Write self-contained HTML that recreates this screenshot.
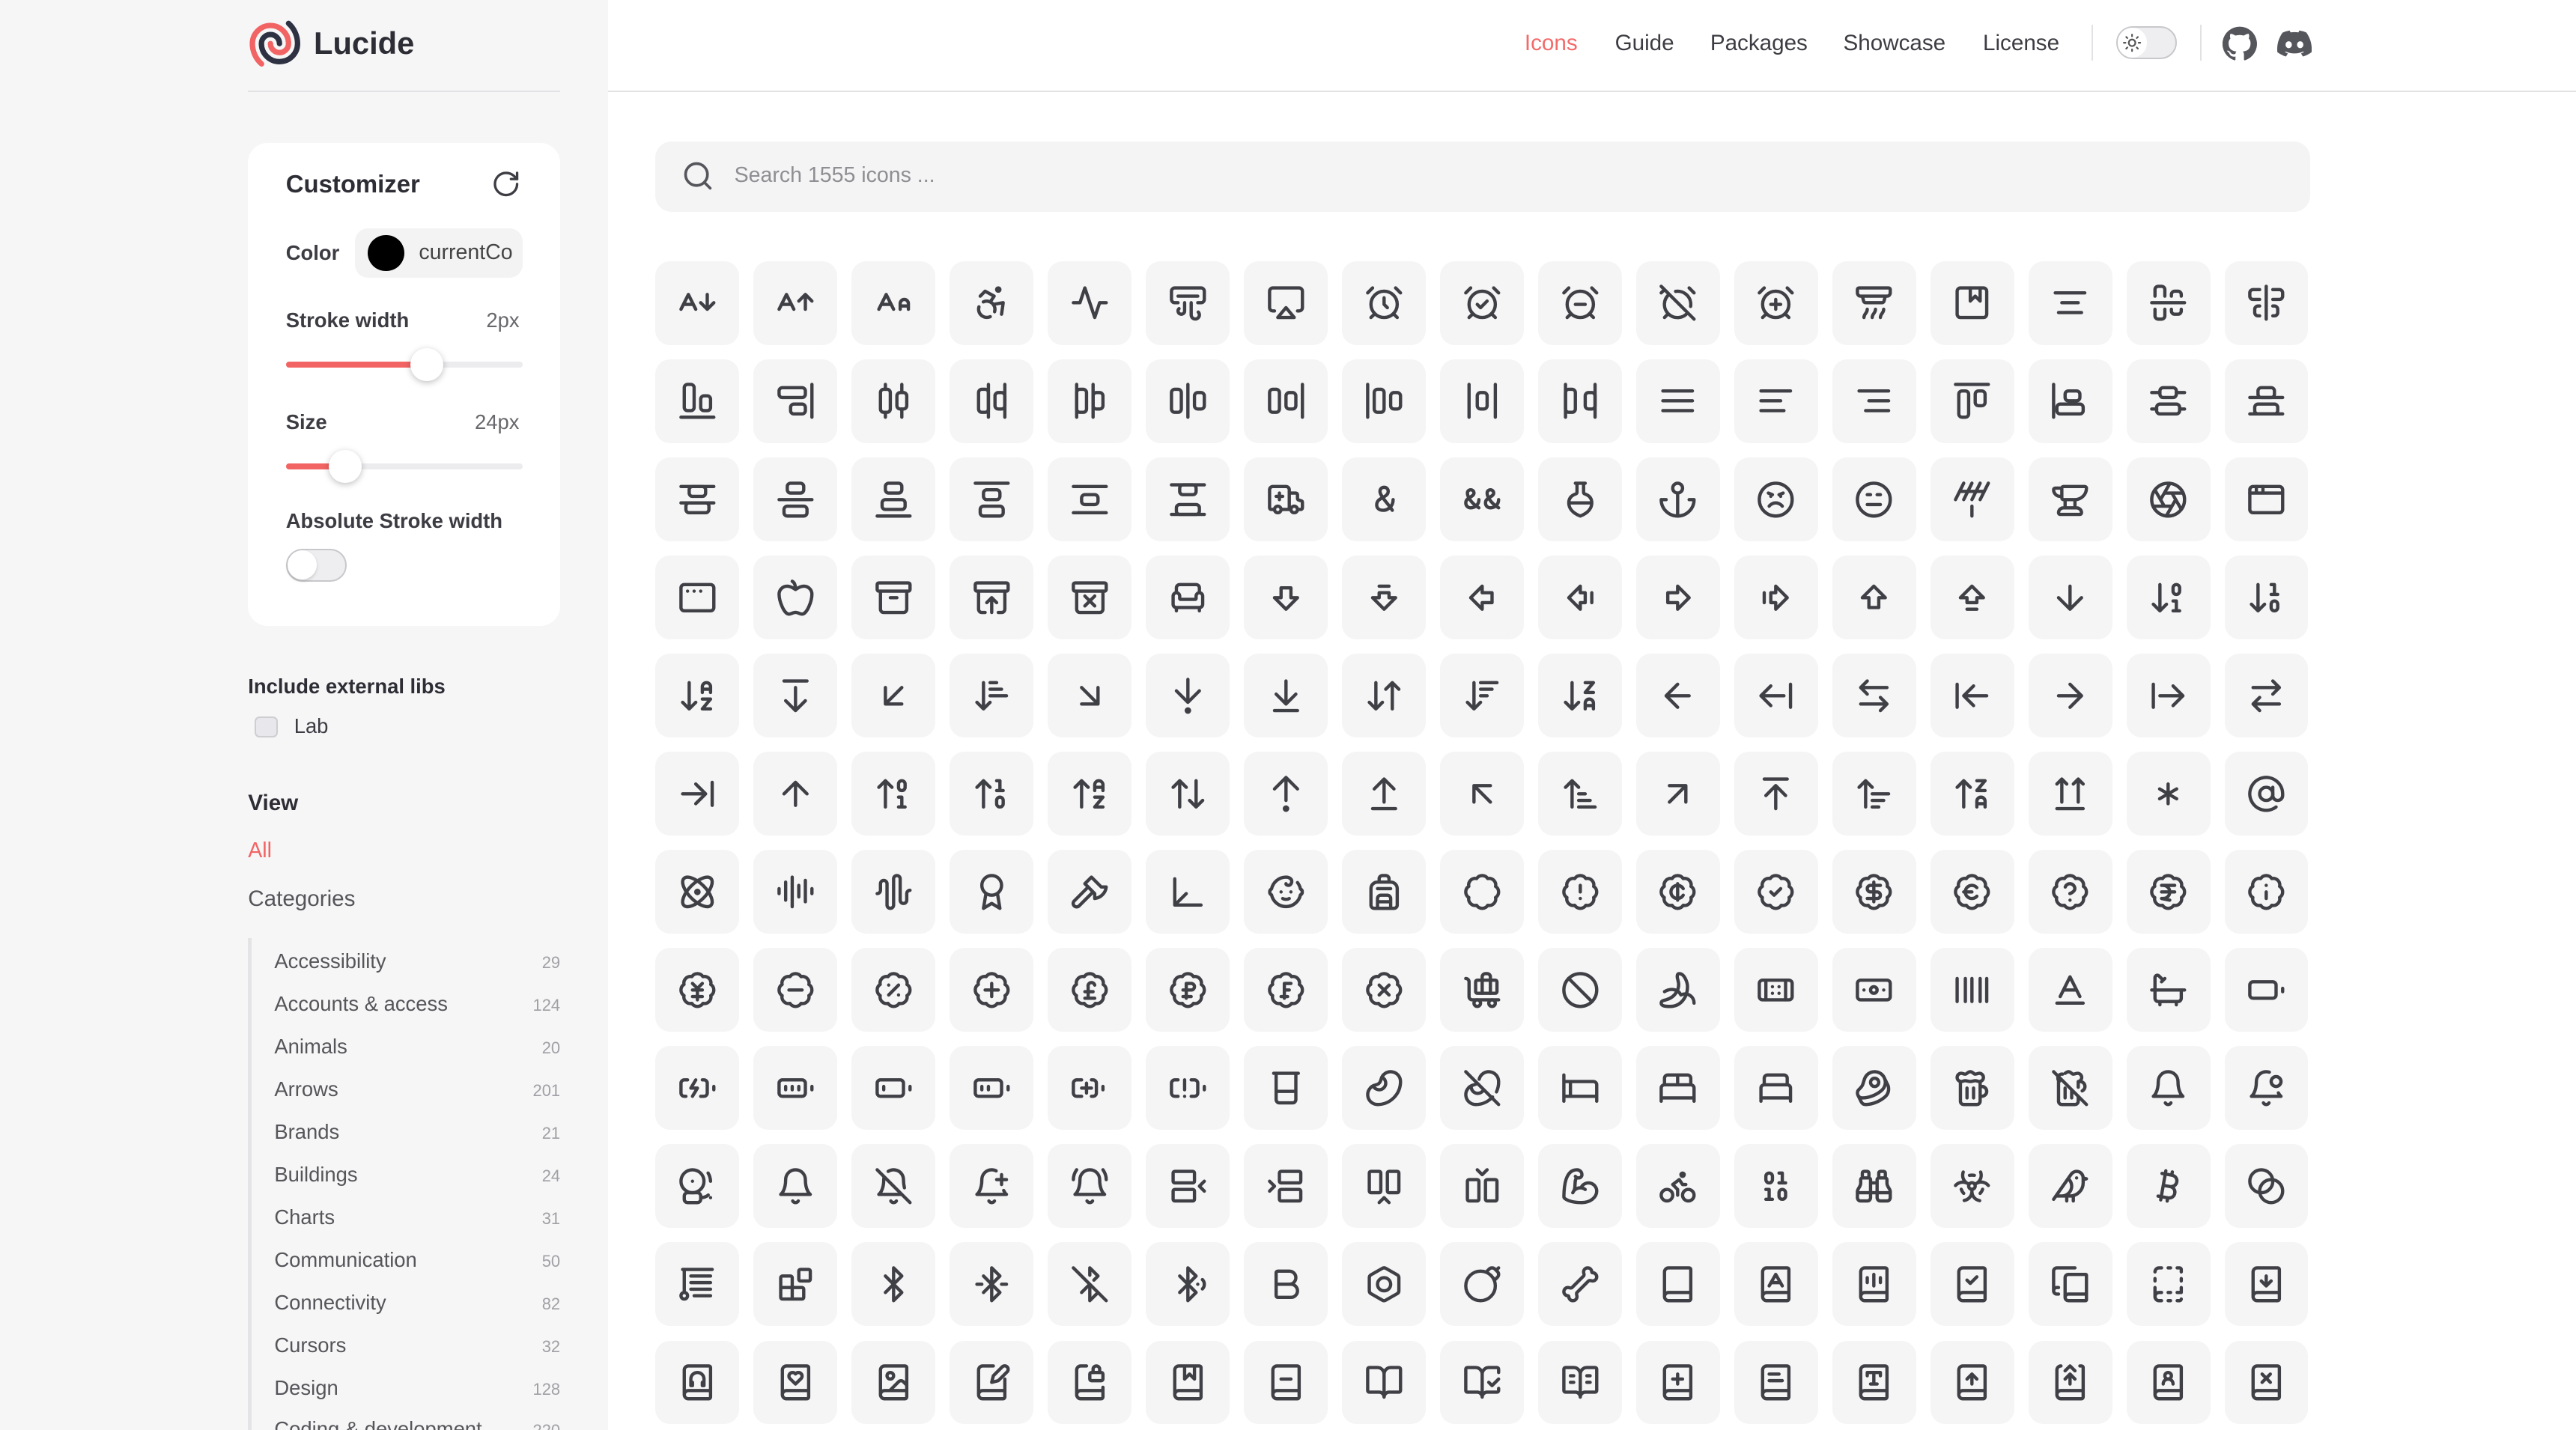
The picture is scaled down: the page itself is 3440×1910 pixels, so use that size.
<!DOCTYPE html>
<html><head><meta charset="utf-8"><style>
html{zoom:2.19388;overflow:hidden;width:1568px;height:870px}
*{box-sizing:border-box;margin:0;padding:0}
body{width:1568px;height:870px;overflow:hidden;background:#fff;font-family:"Liberation Sans",Arial,sans-serif;color:#3c3c43;position:relative}
.abs{position:absolute;white-space:nowrap}
#side{position:absolute;left:0;top:0;width:370px;height:871px;background:#f6f6f7;overflow:hidden}
.card{position:absolute;left:151px;top:87px;width:190px;height:294px;background:#fff;border-radius:12px}
.lbl{font-size:12.5px;font-weight:bold;color:#3c3c43;line-height:16px}
.val{font-size:12.5px;color:#67676c;line-height:16px}
.track{position:absolute;left:174px;width:144px;height:4px;border-radius:2px;background:#ececef}
.track b{display:block;height:4px;border-radius:2px;background:#f26464}
.thumb{position:absolute;width:20px;height:20px;border-radius:50%;background:#fff;box-shadow:0 1px 4px rgba(0,0,0,.25)}
.cat{position:absolute;left:167px;width:174px;font-size:12.5px;color:#55555a;line-height:16px}
.cat span{position:absolute;right:0;top:1px;font-size:10px;color:#a0a0a5}
.nav{position:absolute;top:18px;font-size:13.5px;line-height:17px;color:#3c3c43}
#grid{position:absolute;left:399px;top:159px;display:grid;grid-template-columns:repeat(17,51px);grid-auto-rows:51px;column-gap:8.7px;row-gap:8.75px}
#grid i{display:flex;align-items:center;justify-content:center;background:#f5f5f5;border-radius:9px}
#grid svg{width:24px;height:24px;fill:none;stroke:#3f3f46;stroke-width:2;stroke-linecap:round;stroke-linejoin:round}
</style></head><body>
<div id="side">
  <svg class="abs" style="left:151px;top:10px" width="33" height="33" viewBox="0 0 24 24" fill="none" stroke-width="2.4" stroke-linecap="round"><path d="M14 12a4 4 0 0 0-8 0 8 8 0 1 0 16 0 11.97 11.97 0 0 0-4-8.94" stroke="#2d3142"/><path d="M10 12a4 4 0 0 0 8 0 8 8 0 1 0-16 0 11.97 11.97 0 0 0 4.06 9" stroke="#f26464"/></svg>
  <div class="abs" style="left:191px;top:15px;font-size:19px;font-weight:bold;color:#2d2d35;line-height:23px">Lucide</div>
  <div class="abs" style="left:151px;top:55px;width:190px;height:1px;background:#e2e2e4"></div>
  <div class="card"></div>
  <div class="abs" style="left:174px;top:103px;font-size:15px;font-weight:bold;color:#2d2d35;line-height:18px">Customizer</div>
  <svg class="abs" style="left:299px;top:103px" width="18" height="18" viewBox="0 0 24 24" fill="none" stroke="#3c3c43" stroke-width="2" stroke-linecap="round" stroke-linejoin="round"><path d="M21 12a9 9 0 1 1-9-9c2.52 0 4.93 1 6.74 2.74L21 8"/><path d="M21 3v5h-5"/></svg>
  <div class="abs lbl" style="left:174px;top:146px">Color</div>
  <div class="abs" style="left:216px;top:139px;width:102px;height:30px;background:#f3f3f4;border-radius:8px;overflow:hidden">
    <div class="abs" style="left:8px;top:4px;width:22px;height:22px;border-radius:50%;background:#000"></div>
    <div class="abs" style="left:39px;top:7px;font-size:13px;color:#444;line-height:16px">currentCo</div>
  </div>
  <div class="abs lbl" style="left:174px;top:187px">Stroke width</div>
  <div class="abs val" style="left:296px;top:187px">2px</div>
  <div class="track" style="top:220px"><b style="width:80px"></b></div>
  <div class="thumb" style="left:250px;top:212px"></div>
  <div class="abs lbl" style="left:174px;top:249px">Size</div>
  <div class="abs val" style="left:289px;top:249px">24px</div>
  <div class="track" style="top:282px"><b style="width:32px"></b></div>
  <div class="thumb" style="left:200px;top:274px"></div>
  <div class="abs lbl" style="left:174px;top:309px">Absolute Stroke width</div>
  <div class="abs" style="left:174px;top:334px;width:37px;height:20px;border-radius:10px;background:#eeeef1;border:1px solid #c8c8cc"></div>
  <div class="abs" style="left:175px;top:335px;width:18px;height:18px;border-radius:50%;background:#fff;box-shadow:0 1px 2px rgba(0,0,0,.15)"></div>

  <div class="abs lbl" style="left:151px;top:410px;color:#2d2d35">Include external libs</div>
  <div class="abs" style="left:155px;top:436px;width:14px;height:13px;border-radius:3px;background:#e8e8ec;border:1px solid #cdcdd2"></div>
  <div class="abs" style="left:179px;top:434px;font-size:12.5px;color:#3c3c43;line-height:16px">Lab</div>
  <div class="abs" style="left:151px;top:481px;font-size:13.5px;font-weight:bold;color:#2d2d35;line-height:16px">View</div>
  <div class="abs" style="left:151px;top:510px;font-size:13px;color:#f26464;line-height:16px">All</div>
  <div class="abs" style="left:151px;top:539px;font-size:13.5px;color:#55555a;line-height:16px">Categories</div>
  <div class="abs" style="left:151px;top:571px;width:2px;height:300px;background:#e4e4e7"></div>
  <div class="cat" style="top:577px">Accessibility<span>29</span></div>
  <div class="cat" style="top:603px">Accounts &amp; access<span>124</span></div>
  <div class="cat" style="top:629px">Animals<span>20</span></div>
  <div class="cat" style="top:655px">Arrows<span>201</span></div>
  <div class="cat" style="top:681px">Brands<span>21</span></div>
  <div class="cat" style="top:707px">Buildings<span>24</span></div>
  <div class="cat" style="top:733px">Charts<span>31</span></div>
  <div class="cat" style="top:759px">Communication<span>50</span></div>
  <div class="cat" style="top:785px">Connectivity<span>82</span></div>
  <div class="cat" style="top:811px">Cursors<span>32</span></div>
  <div class="cat" style="top:837px">Design<span>128</span></div>
  <div class="cat" style="top:862px">Coding &amp; development<span>220</span></div>
</div>

<div class="abs" style="left:370px;top:55px;width:1198px;height:1px;background:#e2e2e4"></div>
<div class="nav" style="left:928px;color:#f36a6a">Icons</div>
<div class="nav" style="left:983px">Guide</div>
<div class="nav" style="left:1041px">Packages</div>
<div class="nav" style="left:1122px">Showcase</div>
<div class="nav" style="left:1207px">License</div>
<div class="abs" style="left:1273px;top:15px;width:1px;height:22px;background:#e2e2e4"></div>
<div class="abs" style="left:1288px;top:16px;width:37px;height:20px;border-radius:10px;background:#eeeef1;border:1px solid #c8c8cc"></div>
<div class="abs" style="left:1289px;top:17px;width:18px;height:18px;border-radius:50%;background:#fff"></div>
<svg class="abs" style="left:1292px;top:20px" width="12" height="12" viewBox="0 0 24 24" fill="none" stroke="#555" stroke-width="2" stroke-linecap="round"><circle cx="12" cy="12" r="4"/><path d="M12 2v2M12 20v2M4.9 4.9l1.4 1.4M17.7 17.7l1.4 1.4M2 12h2M20 12h2M6.3 17.7l-1.4 1.4M19.1 4.9l-1.4 1.4"/></svg>
<div class="abs" style="left:1339px;top:15px;width:1px;height:22px;background:#e2e2e4"></div>
<svg class="abs" style="left:1353px;top:16px" width="21" height="21" viewBox="0 0 24 24" fill="#55555c"><path d="M12 .3a12 12 0 0 0-3.8 23.4c.6.1.8-.3.8-.6v-2c-3.3.7-4-1.6-4-1.6-.6-1.4-1.4-1.8-1.4-1.8-1-.7.1-.7.1-.7 1.2.1 1.8 1.2 1.8 1.2 1 1.8 2.8 1.3 3.5 1 0-.8.4-1.3.7-1.6-2.7-.3-5.5-1.3-5.5-6 0-1.200.5-2.3 1.3-3.1-.2-.4-.6-1.6 0-3.2 0 0 1-.3 3.4 1.2a11.5 11.5 0 0 1 6 0c2.3-1.5 3.3-1.2 3.3-1.2.6 1.6.2 2.8 0 3.2.9.8 1.3 1.9 1.3 3.2 0 4.6-2.8 5.6-5.5 5.9.5.4.9 1 .9 2.2v3.3c0 .3.1.7.8.6A12 12 0 0 0 12 .3"/></svg>
<svg class="abs" style="left:1386px;top:16px" width="21" height="21" viewBox="0 0 24 24" fill="#55555c"><path d="M20.3 4.4A19.8 19.8 0 0 0 15.4 3l-.6 1.3a18.3 18.3 0 0 0-5.5 0L8.6 3a19.7 19.7 0 0 0-4.9 1.5C.5 9.1-.3 13.6.1 18.1a19.9 19.9 0 0 0 6 3l1.3-2.1c-.7-.3-1.4-.6-2-1l.5-.4a14.2 14.2 0 0 0 12.2 0l.5.4c-.6.4-1.3.7-2 1l1.3 2.1a19.8 19.8 0 0 0 6-3c.5-5.2-.8-9.7-3.6-13.7zM8 15.3c-1.2 0-2.2-1.1-2.2-2.4S6.8 10.5 8 10.5s2.2 1.1 2.2 2.4-1 2.4-2.2 2.4zm8 0c-1.2 0-2.2-1.1-2.2-2.4s1-2.4 2.2-2.4 2.2 1.1 2.2 2.4-1 2.4-2.2 2.4z"/></svg>

<div class="abs" style="left:399px;top:86px;width:1007px;height:43px;background:#f4f4f5;border-radius:10px"></div>
<svg class="abs" style="left:415px;top:97px" width="20" height="20" viewBox="0 0 24 24" fill="none" stroke="#55555c" stroke-width="2" stroke-linecap="round"><circle cx="11" cy="11" r="8"/><path d="m21 21-4.3-4.3"/></svg>
<div class="abs" style="left:447px;top:99px;font-size:13px;color:#8e8e93;line-height:16px">Search 1555 icons ...</div>

<div id="grid">
<i><svg viewBox="0 0 24 24"><path d="M3.5 13h6M2 16l4.5-9 4.5 9M18 7v9M14 12l4 4 4-4"/></svg></i>
<i><svg viewBox="0 0 24 24"><path d="M3.5 13h6M2 16l4.5-9 4.5 9M18 16V7M14 11l4-4 4 4"/></svg></i>
<i><svg viewBox="0 0 24 24"><path d="M21 14h-5M16 16v-3.5a2.5 2.5 0 0 1 5 0V16M4.5 13h6M3 16l4.5-9 4.5 9"/></svg></i>
<i><svg viewBox="0 0 24 24"><circle cx="16" cy="4" r="1"/><path d="M18 19l1-7-6 1M5 8l3-3 5.5 3-2.36 3.5M4.24 14.5a5 5 0 0 0 6.88 6M13.760 17.5a5 5 0 0 0-6.88-6"/></svg></i>
<i><svg viewBox="0 0 24 24"><path d="M22 12h-4l-3 9L9 3l-3 9H2"/></svg></i>
<i><svg viewBox="0 0 24 24"><path d="M6 12H4a2 2 0 0 1-2-2V5a2 2 0 0 1 2-2h16a2 2 0 0 1 2 2v5a2 2 0 0 1-2 2h-2M6 8h12M18.3 17.7a2.5 2.5 0 0 1-3.16 3.83 2.53 2.53 0 0 1-1.14-2V12M6.6 15.6A2 2 0 1 0 10 17v-5"/></svg></i>
<i><svg viewBox="0 0 24 24"><path d="M5 17H4a2 2 0 0 1-2-2V5a2 2 0 0 1 2-2h16a2 2 0 0 1 2 2v10a2 2 0 0 1-2 2h-1M12 15l5 6H7z"/></svg></i>
<i><svg viewBox="0 0 24 24"><circle cx="12" cy="13" r="8"/><path d="M12 9v4l2 2M5 3 2 6M22 6l-3-3M6.38 18.7 4 21M17.64 18.67 20 21"/></svg></i>
<i><svg viewBox="0 0 24 24"><circle cx="12" cy="13" r="8"/><path d="M5 3 2 6M22 6l-3-3M6.38 18.7 4 21M17.64 18.67 20 21M9 13l2 2 4-4"/></svg></i>
<i><svg viewBox="0 0 24 24"><circle cx="12" cy="13" r="8"/><path d="M5 3 2 6M22 6l-3-3M6.38 18.7 4 21M17.64 18.67 20 21M9 13h6"/></svg></i>
<i><svg viewBox="0 0 24 24"><path d="M6.87 6.87a8 8 0 1 0 11.26 11.26M19.9 14.25a8 8 0 0 0-9.15-9.15M22 6l-3-3M6.26 18.67 4 21M2 2l20 20M4 4 2 6"/></svg></i>
<i><svg viewBox="0 0 24 24"><circle cx="12" cy="13" r="8"/><path d="M5 3 2 6M22 6l-3-3M6.38 18.7 4 21M17.64 18.67 20 21M12 10v6M9 13h6"/></svg></i>
<i><svg viewBox="0 0 24 24"><path d="M11 21c0-2.5 2-2.5 2-5M16 21c0-2.5 2-2.5 2-5M19 8l-.8 3a1.25 1.25 0 0 1-1.2 1H7a1.25 1.25 0 0 1-1.2-1L5 8M21 3a1 1 0 0 1 1 1v2a2 2 0 0 1-2 2H4a2 2 0 0 1-2-2V4a1 1 0 0 1 1-1zM6 21c0-2.5 2-2.5 2-5"/></svg></i>
<i><svg viewBox="0 0 24 24"><rect x="3" y="3" width="18" height="18" rx="2"/><path d="M11 3v8l3-3 3 3V3"/></svg></i>
<i><svg viewBox="0 0 24 24"><path d="M17 12H7M19 18H5M21 6H3"/></svg></i>
<i><svg viewBox="0 0 24 24"><path d="M2 12h20M10 16v4a2 2 0 0 1-2 2H6a2 2 0 0 1-2-2v-4M10 8V4a2 2 0 0 0-2-2H6a2 2 0 0 0-2 2v4M20 16v1a2 2 0 0 1-2 2h-2a2 2 0 0 1-2-2v-1M14 8V7c0-1.1.9-2 2-2h2a2 2 0 0 1 2 2v1"/></svg></i>
<i><svg viewBox="0 0 24 24"><path d="M12 2v20M8 10H4a2 2 0 0 1-2-2V6c0-1.1.9-2 2-2h4M16 10h4a2 2 0 0 0 2-2V6a2 2 0 0 0-2-2h-4M8 20H7a2 2 0 0 1-2-2v-2c0-1.1.9-2 2-2h1M16 14h1a2 2 0 0 1 2 2v2a2 2 0 0 1-2 2h-1"/></svg></i>
<i><svg viewBox="0 0 24 24"><rect x="4" y="2" width="6" height="16" rx="2"/><rect x="14" y="9" width="6" height="9" rx="2"/><path d="M22 22H2"/></svg></i>
<i><svg viewBox="0 0 24 24"><rect x="2" y="4" width="16" height="6" rx="2"/><rect x="9" y="14" width="9" height="6" rx="2"/><path d="M22 22V2"/></svg></i>
<i><svg viewBox="0 0 24 24"><rect x="4" y="5" width="6" height="14" rx="2"/><rect x="14" y="7" width="6" height="10" rx="2"/><path d="M17 22v-5M17 7V2M7 22v-3M7 5V2"/></svg></i>
<i><svg viewBox="0 0 24 24"><rect x="4" y="5" width="6" height="14" rx="2"/><rect x="14" y="7" width="6" height="10" rx="2"/><path d="M10 2v20M20 2v20"/></svg></i>
<i><svg viewBox="0 0 24 24"><rect x="4" y="5" width="6" height="14" rx="2"/><rect x="14" y="7" width="6" height="10" rx="2"/><path d="M4 2v20M14 2v20"/></svg></i>
<i><svg viewBox="0 0 24 24"><rect x="2" y="5" width="6" height="14" rx="2"/><rect x="16" y="7" width="6" height="10" rx="2"/><path d="M12 2v20"/></svg></i>
<i><svg viewBox="0 0 24 24"><rect x="2" y="5" width="6" height="14" rx="2"/><rect x="12" y="7" width="6" height="10" rx="2"/><path d="M22 2v20"/></svg></i>
<i><svg viewBox="0 0 24 24"><rect x="6" y="5" width="6" height="14" rx="2"/><rect x="16" y="7" width="6" height="10" rx="2"/><path d="M2 2v20"/></svg></i>
<i><svg viewBox="0 0 24 24"><rect x="9" y="7" width="6" height="10" rx="2"/><path d="M4 22V2M20 22V2"/></svg></i>
<i><svg viewBox="0 0 24 24"><rect x="3" y="5" width="6" height="14" rx="2"/><rect x="15" y="7" width="6" height="10" rx="2"/><path d="M3 2v20M21 2v20"/></svg></i>
<i><svg viewBox="0 0 24 24"><path d="M3 6h18M3 12h18M3 18h18"/></svg></i>
<i><svg viewBox="0 0 24 24"><path d="M15 12H3M17 18H3M21 6H3"/></svg></i>
<i><svg viewBox="0 0 24 24"><path d="M21 12H9M21 18H7M21 6H3"/></svg></i>
<i><svg viewBox="0 0 24 24"><rect x="4" y="6" width="6" height="16" rx="2"/><rect x="14" y="6" width="6" height="9" rx="2"/><path d="M22 2H2"/></svg></i>
<i><svg viewBox="0 0 24 24"><rect x="9" y="6" width="9" height="6" rx="2"/><rect x="4" y="14" width="16" height="6" rx="2"/><path d="M2 2v20"/></svg></i>
<i><svg viewBox="0 0 24 24"><rect x="5" y="14" width="14" height="6" rx="2"/><rect x="7" y="4" width="10" height="6" rx="2"/><path d="M22 17h-3M22 7h-5M5 17H2M7 7H2"/></svg></i>
<i><svg viewBox="0 0 24 24"><rect x="5" y="14" width="14" height="6" rx="2"/><rect x="7" y="4" width="10" height="6" rx="2"/><path d="M2 20h20M2 10h20"/></svg></i>
<i><svg viewBox="0 0 24 24"><rect x="5" y="14" width="14" height="6" rx="2"/><rect x="7" y="4" width="10" height="6" rx="2"/><path d="M2 14h20M2 4h20"/></svg></i>
<i><svg viewBox="0 0 24 24"><rect x="5" y="16" width="14" height="6" rx="2"/><rect x="7" y="2" width="10" height="6" rx="2"/><path d="M2 12h20"/></svg></i>
<i><svg viewBox="0 0 24 24"><rect x="5" y="12" width="14" height="6" rx="2"/><rect x="7" y="2" width="10" height="6" rx="2"/><path d="M2 22h20"/></svg></i>
<i><svg viewBox="0 0 24 24"><rect x="5" y="16" width="14" height="6" rx="2"/><rect x="7" y="6" width="10" height="6" rx="2"/><path d="M2 2h20"/></svg></i>
<i><svg viewBox="0 0 24 24"><rect x="7" y="9" width="10" height="6" rx="2"/><path d="M22 20H2M22 4H2"/></svg></i>
<i><svg viewBox="0 0 24 24"><rect x="5" y="15" width="14" height="6" rx="2"/><rect x="7" y="3" width="10" height="6" rx="2"/><path d="M2 21h20M2 3h20"/></svg></i>
<i><svg viewBox="0 0 24 24"><path d="M10 10H6M14 18V6a2 2 0 0 0-2-2H4a2 2 0 0 0-2 2v11a1 1 0 0 0 1 1h2M19 18h2a1 1 0 0 0 1-1v-3.28a1 1 0 0 0-.68-.95l-1.8-.6A1 1 0 0 1 19 11.3V9a1 1 0 0 0-1-1h-4M8 8v4M9 18h6"/><circle cx="17" cy="18" r="2"/><circle cx="7" cy="18" r="2"/></svg></i>
<i><svg viewBox="0 0 24 24"><path d="M17.5 12c0 4.4-3.6 6.5-6 6.5s-4-1.2-4-3.3c0-4.8 7-4.2 7-8.2 0-1.5-1-2.5-2.5-2.5S9.5 5.6 9.5 7c0 3 6 8.6 7.5 11.5"/></svg></i>
<i><svg viewBox="0 0 24 24"><path d="M10 17c-5-3-7-7-7-9a2 2 0 0 1 4 0c0 2.5-5 2.5-5 6 0 1.7 1.3 3 3 3 2.8 0 5-2.2 5-5M22 17c-5-3-7-7-7-9a2 2 0 0 1 4 0c0 2.5-5 2.5-5 6 0 1.7 1.3 3 3 3 2.8 0 5-2.2 5-5"/></svg></i>
<i><svg viewBox="0 0 24 24"><path d="M10 2v5.6c0 .4-.3.8-.7.9C6.6 9.4 5 11 5 14c0 3 2 6 7 8 5-2 7-5 7-8 0-3-1.6-4.6-4.3-5.5-.4-.1-.7-.5-.7-.9V2M9 2h6M5 14h14"/></svg></i>
<i><svg viewBox="0 0 24 24"><path d="M12 22V8M5 12H2a10 10 0 0 0 20 0h-3"/><circle cx="12" cy="5" r="3"/></svg></i>
<i><svg viewBox="0 0 24 24"><circle cx="12" cy="12" r="10"/><path d="M16 16s-1.5-2-4-2-4 2-4 2M7.5 8 10 9M14 9l2.5-1M9 10h.01M15 10h.01"/></svg></i>
<i><svg viewBox="0 0 24 24"><circle cx="12" cy="12" r="10"/><path d="M8 15h8M8 9h2M14 9h2"/></svg></i>
<i><svg viewBox="0 0 24 24"><path d="M2 12 7 2M7 12l5-10M12 12l5-10M17 12l5-10M4.5 7h15M12 16v6"/></svg></i>
<i><svg viewBox="0 0 24 24"><path d="M7 10H6a4 4 0 0 1-4-4 1 1 0 0 1 1-1h4M7 5a1 1 0 0 1 1-1h13a1 1 0 0 1 1 1 7 7 0 0 1-7 7H8a1 1 0 0 1-1-1zM9 12v5M15 12v5M5 20a3 3 0 0 1 3-3h8a3 3 0 0 1 3 3 1 1 0 0 1-1 1H6a1 1 0 0 1-1-1"/></svg></i>
<i><svg viewBox="0 0 24 24"><circle cx="12" cy="12" r="10"/><path d="M14.31 8l5.74 9.94M9.69 8h11.48M7.38 12l5.74-9.94M9.69 16 3.95 6.06M14.31 16H2.83M16.62 12l-5.74 9.94"/></svg></i>
<i><svg viewBox="0 0 24 24"><rect x="2" y="4" width="20" height="16" rx="2"/><path d="M10 4v4M2 8h20M6 4v4"/></svg></i>
<i><svg viewBox="0 0 24 24"><rect x="2" y="4" width="20" height="16" rx="2"/><path d="M6 8h.01M10 8h.01M14 8h.01"/></svg></i>
<i><svg viewBox="0 0 24 24"><path d="M12 20.94c1.5 0 2.75 1.06 4 1.06 3 0 6-8 6-12.22A4.91 4.91 0 0 0 17 5c-2.22 0-4 1.44-5 2-1-.56-2.78-2-5-2a4.9 4.9 0 0 0-5 4.78C2 14 5 22 8 22c1.25 0 2.5-1.06 4-1.06ZM10 2c1 .5 2 2 2 5"/></svg></i>
<i><svg viewBox="0 0 24 24"><rect x="2" y="3" width="20" height="5" rx="1"/><path d="M4 8v11a2 2 0 0 0 2 2h12a2 2 0 0 0 2-2V8M10 12h4"/></svg></i>
<i><svg viewBox="0 0 24 24"><rect x="2" y="3" width="20" height="5" rx="1"/><path d="M4 8v11a2 2 0 0 0 2 2h2M20 8v11a2 2 0 0 1-2 2h-2M9 15l3-3 3 3M12 12v9"/></svg></i>
<i><svg viewBox="0 0 24 24"><rect x="2" y="3" width="20" height="5" rx="1"/><path d="M4 8v11a2 2 0 0 0 2 2h12a2 2 0 0 0 2-2V8M15 11l-6 6M9 11l6 6"/></svg></i>
<i><svg viewBox="0 0 24 24"><path d="M19 9V6a2 2 0 0 0-2-2H7a2 2 0 0 0-2 2v3M3 16a2 2 0 0 0 2 2h14a2 2 0 0 0 2-2v-5a2 2 0 0 0-4 0v1.5a.5.5 0 0 1-.5.5h-9a.5.5 0 0 1-.5-.5V11a2 2 0 0 0-4 0zM5 18v2M19 18v2"/></svg></i>
<i><svg viewBox="0 0 24 24"><path d="M15 6v6h4l-7 7-7-7h4V6h6z"/></svg></i>
<i><svg viewBox="0 0 24 24"><path d="M15 5H9M15 9v3h4l-7 7-7-7h4V9z"/></svg></i>
<i><svg viewBox="0 0 24 24"><path d="M18 15h-6v4l-7-7 7-7v4h6v6z"/></svg></i>
<i><svg viewBox="0 0 24 24"><path d="M19 15V9M15 15h-3v4l-7-7 7-7v4h3v6z"/></svg></i>
<i><svg viewBox="0 0 24 24"><path d="M6 9h6V5l7 7-7 7v-4H6V9z"/></svg></i>
<i><svg viewBox="0 0 24 24"><path d="M5 9v6M9 9h3V5l7 7-7 7v-4H9V9z"/></svg></i>
<i><svg viewBox="0 0 24 24"><path d="M9 18v-6H5l7-7 7 7h-4v6H9z"/></svg></i>
<i><svg viewBox="0 0 24 24"><path d="M9 19h6M9 15v-3H5l7-7 7 7h-4v3H9z"/></svg></i>
<i><svg viewBox="0 0 24 24"><path d="M12 5v14M19 12l-7 7-7-7"/></svg></i>
<i><svg viewBox="0 0 24 24"><path d="M3 16l4 4 4-4M7 20V4M17 20v-6h-2M15 20h4"/><rect x="15" y="4" width="4" height="6" ry="2"/></svg></i>
<i><svg viewBox="0 0 24 24"><path d="M3 16l4 4 4-4M7 20V4M17 10V4h-2M15 10h4"/><rect x="15" y="14" width="4" height="6" ry="2"/></svg></i>
<i><svg viewBox="0 0 24 24"><path d="M3 16l4 4 4-4M7 20V4M20 8h-5M15 10V6.5a2.5 2.5 0 0 1 5 0V10M15 14h5l-5 6h5"/></svg></i>
<i><svg viewBox="0 0 24 24"><path d="M19 3H5M12 21V7M6 15l6 6 6-6"/></svg></i>
<i><svg viewBox="0 0 24 24"><path d="M17 7 7 17M17 17H7V7"/></svg></i>
<i><svg viewBox="0 0 24 24"><path d="M3 16l4 4 4-4M7 20V4M11 4h4M11 8h7M11 12h10"/></svg></i>
<i><svg viewBox="0 0 24 24"><path d="M7 7l10 10M17 7v10H7"/></svg></i>
<i><svg viewBox="0 0 24 24"><path d="M12 2v14M19 9l-7 7-7-7"/><circle cx="12" cy="21" r="1"/></svg></i>
<i><svg viewBox="0 0 24 24"><path d="M12 17V3M6 11l6 6 6-6M19 21H5"/></svg></i>
<i><svg viewBox="0 0 24 24"><path d="M3 16l4 4 4-4M7 20V4M21 8l-4-4-4 4M17 4v16"/></svg></i>
<i><svg viewBox="0 0 24 24"><path d="M3 16l4 4 4-4M7 20V4M11 4h10M11 8h7M11 12h4"/></svg></i>
<i><svg viewBox="0 0 24 24"><path d="M3 16l4 4 4-4M7 4v16M15 4h5l-5 6h5M15 20v-3.5a2.5 2.5 0 0 1 5 0V20M20 18h-5"/></svg></i>
<i><svg viewBox="0 0 24 24"><path d="M12 19l-7-7 7-7M19 12H5"/></svg></i>
<i><svg viewBox="0 0 24 24"><path d="M9 6l-6 6 6 6M3 12h14M21 19V5"/></svg></i>
<i><svg viewBox="0 0 24 24"><path d="M8 3 4 7l4 4M4 7h16M16 21l4-4-4-4M20 17H4"/></svg></i>
<i><svg viewBox="0 0 24 24"><path d="M3 19V5M13 6l-6 6 6 6M7 12h14"/></svg></i>
<i><svg viewBox="0 0 24 24"><path d="M5 12h14M12 5l7 7-7 7"/></svg></i>
<i><svg viewBox="0 0 24 24"><path d="M3 5v14M21 12H7M15 18l6-6-6-6"/></svg></i>
<i><svg viewBox="0 0 24 24"><path d="M16 3l4 4-4 4M20 7H4M8 21l-4-4 4-4M4 17h16"/></svg></i>
<i><svg viewBox="0 0 24 24"><path d="M17 12H3M11 18l6-6-6-6M21 5v14"/></svg></i>
<i><svg viewBox="0 0 24 24"><path d="M5 12l7-7 7 7M12 19V5"/></svg></i>
<i><svg viewBox="0 0 24 24"><path d="M3 8l4-4 4 4M7 4v16M17 20v-6h-2M15 20h4"/><rect x="15" y="4" width="4" height="6" ry="2"/></svg></i>
<i><svg viewBox="0 0 24 24"><path d="M3 8l4-4 4 4M7 4v16M17 10V4h-2M15 10h4"/><rect x="15" y="14" width="4" height="6" ry="2"/></svg></i>
<i><svg viewBox="0 0 24 24"><path d="M3 8l4-4 4 4M7 4v16M20 8h-5M15 10V6.5a2.5 2.5 0 0 1 5 0V10M15 14h5l-5 6h5"/></svg></i>
<i><svg viewBox="0 0 24 24"><path d="M21 16l-4 4-4-4M17 20V4M3 8l4-4 4 4M7 4v16"/></svg></i>
<i><svg viewBox="0 0 24 24"><path d="M5 9l7-7 7 7M12 16V2"/><circle cx="12" cy="21" r="1"/></svg></i>
<i><svg viewBox="0 0 24 24"><path d="M18 9l-6-6-6 6M12 3v14M5 21h14"/></svg></i>
<i><svg viewBox="0 0 24 24"><path d="M7 17V7h10M17 17 7 7"/></svg></i>
<i><svg viewBox="0 0 24 24"><path d="M3 8l4-4 4 4M7 4v16M11 12h4M11 16h7M11 20h10"/></svg></i>
<i><svg viewBox="0 0 24 24"><path d="M7 7h10v10M7 17 17 7"/></svg></i>
<i><svg viewBox="0 0 24 24"><path d="M5 3h14M18 13l-6-6-6 6M12 7v14"/></svg></i>
<i><svg viewBox="0 0 24 24"><path d="M3 8l4-4 4 4M7 4v16M11 12h10M11 16h7M11 20h4"/></svg></i>
<i><svg viewBox="0 0 24 24"><path d="M3 8l4-4 4 4M7 4v16M15 4h5l-5 6h5M15 20v-3.5a2.5 2.5 0 0 1 5 0V20M20 18h-5"/></svg></i>
<i><svg viewBox="0 0 24 24"><path d="M4 6l3-3 3 3M7 17V3M14 6l3-3 3 3M17 17V3M4 21h16"/></svg></i>
<i><svg viewBox="0 0 24 24"><path d="M12 6v12M17.2 9 6.8 15M6.8 9l10.4 6"/></svg></i>
<i><svg viewBox="0 0 24 24"><circle cx="12" cy="12" r="4"/><path d="M16 8v5a3 3 0 0 0 6 0v-1a10 10 0 1 0-4 8"/></svg></i>
<i><svg viewBox="0 0 24 24"><circle cx="12" cy="12" r="1"/><path d="M20.2 20.2c2-2 0-7.4-4.5-11.9S5.8 1.8 3.8 3.8s0 7.4 4.5 11.9 9.9 6.5 11.9 4.5ZM15.7 15.7c4.5-4.5 6.5-9.9 4.5-11.9s-7.4 0-11.9 4.5-6.5 9.9-4.5 11.9 7.4 0 11.9-4.5Z"/></svg></i>
<i><svg viewBox="0 0 24 24"><path d="M2 10v3M6 6v11M10 3v18M14 8v7M18 5v13M22 10v3"/></svg></i>
<i><svg viewBox="0 0 24 24"><path d="M2 13a2 2 0 0 0 2-2V7a2 2 0 0 1 4 0v13a2 2 0 0 0 4 0V4a2 2 0 0 1 4 0v13a2 2 0 0 0 4 0v-4a2 2 0 0 1 2-2"/></svg></i>
<i><svg viewBox="0 0 24 24"><circle cx="12" cy="8" r="6"/><path d="M15.48 12.89 17 22l-5-3-5 3 1.52-9.11"/></svg></i>
<i><svg viewBox="0 0 24 24"><path d="M14 12l-8.5 8.5a2.12 2.12 0 1 1-3-3L11 9M15 13 9 7l4-4 6 6h3a8 8 0 0 1-7 7z"/></svg></i>
<i><svg viewBox="0 0 24 24"><path d="M4 4v16h16M4 20l7-7"/></svg></i>
<i><svg viewBox="0 0 24 24"><path d="M9 12h.01M15 12h.01M10 16c.5.3 1.2.5 2 .5s1.5-.2 2-.5M19 6.3a9 9 0 0 1 1.8 3.9 2 2 0 0 1 0 3.6 9 9 0 0 1-17.6 0 2 2 0 0 1 0-3.6A9 9 0 0 1 12 3c2 0 3.5 1.1 3.5 2.5s-.9 2.5-2 2.5c-.8 0-1.5-.4-1.5-1"/></svg></i>
<i><svg viewBox="0 0 24 24"><path d="M4 10a4 4 0 0 1 4-4h8a4 4 0 0 1 4 4v10a2 2 0 0 1-2 2H6a2 2 0 0 1-2-2zM8 10h8M8 18h8M8 22v-6a2 2 0 0 1 2-2h4a2 2 0 0 1 2 2v6M9 6V4a2 2 0 0 1 2-2h2a2 2 0 0 1 2 2v2"/></svg></i>
<i><svg viewBox="0 0 24 24"><path d="M3.85 8.62a4 4 0 0 1 4.78-4.77 4 4 0 0 1 6.74 0 4 4 0 0 1 4.78 4.78 4 4 0 0 1 0 6.74 4 4 0 0 1-4.77 4.78 4 4 0 0 1-6.75 0 4 4 0 0 1-4.78-4.77 4 4 0 0 1 0-6.76Z"/></svg></i>
<i><svg viewBox="0 0 24 24"><path d="M3.85 8.62a4 4 0 0 1 4.78-4.77 4 4 0 0 1 6.74 0 4 4 0 0 1 4.78 4.78 4 4 0 0 1 0 6.74 4 4 0 0 1-4.77 4.78 4 4 0 0 1-6.75 0 4 4 0 0 1-4.78-4.77 4 4 0 0 1 0-6.76ZM12 8v4M12 16h.01"/></svg></i>
<i><svg viewBox="0 0 24 24"><path d="M3.85 8.62a4 4 0 0 1 4.78-4.77 4 4 0 0 1 6.74 0 4 4 0 0 1 4.78 4.78 4 4 0 0 1 0 6.74 4 4 0 0 1-4.77 4.78 4 4 0 0 1-6.75 0 4 4 0 0 1-4.78-4.77 4 4 0 0 1 0-6.76ZM12 7v10M15.4 10a4 4 0 1 0 0 4"/></svg></i>
<i><svg viewBox="0 0 24 24"><path d="M3.85 8.62a4 4 0 0 1 4.78-4.77 4 4 0 0 1 6.74 0 4 4 0 0 1 4.78 4.78 4 4 0 0 1 0 6.74 4 4 0 0 1-4.77 4.78 4 4 0 0 1-6.75 0 4 4 0 0 1-4.78-4.77 4 4 0 0 1 0-6.76ZM9 12l2 2 4-4"/></svg></i>
<i><svg viewBox="0 0 24 24"><path d="M3.85 8.62a4 4 0 0 1 4.78-4.77 4 4 0 0 1 6.74 0 4 4 0 0 1 4.78 4.78 4 4 0 0 1 0 6.74 4 4 0 0 1-4.77 4.78 4 4 0 0 1-6.75 0 4 4 0 0 1-4.78-4.77 4 4 0 0 1 0-6.76ZM16 8h-6a2 2 0 1 0 0 4h4a2 2 0 1 1 0 4H8M12 18V6"/></svg></i>
<i><svg viewBox="0 0 24 24"><path d="M3.85 8.62a4 4 0 0 1 4.78-4.77 4 4 0 0 1 6.74 0 4 4 0 0 1 4.78 4.78 4 4 0 0 1 0 6.74 4 4 0 0 1-4.77 4.78 4 4 0 0 1-6.75 0 4 4 0 0 1-4.78-4.77 4 4 0 0 1 0-6.76ZM7 12h5M15 9.4a4 4 0 1 0 0 5.2"/></svg></i>
<i><svg viewBox="0 0 24 24"><path d="M3.85 8.62a4 4 0 0 1 4.78-4.77 4 4 0 0 1 6.74 0 4 4 0 0 1 4.78 4.78 4 4 0 0 1 0 6.74 4 4 0 0 1-4.77 4.78 4 4 0 0 1-6.75 0 4 4 0 0 1-4.78-4.77 4 4 0 0 1 0-6.76ZM9.09 9a3 3 0 0 1 5.83 1c0 2-3 3-3 3M12 17h.01"/></svg></i>
<i><svg viewBox="0 0 24 24"><path d="M3.85 8.62a4 4 0 0 1 4.78-4.77 4 4 0 0 1 6.74 0 4 4 0 0 1 4.78 4.78 4 4 0 0 1 0 6.74 4 4 0 0 1-4.77 4.78 4 4 0 0 1-6.75 0 4 4 0 0 1-4.78-4.77 4 4 0 0 1 0-6.76ZM8 8h8M8 12h8M13 17l-5-1h1a4 4 0 0 0 0-8"/></svg></i>
<i><svg viewBox="0 0 24 24"><path d="M3.85 8.62a4 4 0 0 1 4.78-4.77 4 4 0 0 1 6.74 0 4 4 0 0 1 4.78 4.78 4 4 0 0 1 0 6.74 4 4 0 0 1-4.77 4.78 4 4 0 0 1-6.75 0 4 4 0 0 1-4.78-4.77 4 4 0 0 1 0-6.76ZM12 16v-4M12 8h.01"/></svg></i>
<i><svg viewBox="0 0 24 24"><path d="M3.85 8.62a4 4 0 0 1 4.78-4.77 4 4 0 0 1 6.74 0 4 4 0 0 1 4.78 4.78 4 4 0 0 1 0 6.74 4 4 0 0 1-4.77 4.78 4 4 0 0 1-6.75 0 4 4 0 0 1-4.78-4.77 4 4 0 0 1 0-6.76ZM9 8l3 3v7M12 11l3-3M9 12h6M9 16h6"/></svg></i>
<i><svg viewBox="0 0 24 24"><path d="M3.85 8.62a4 4 0 0 1 4.78-4.77 4 4 0 0 1 6.74 0 4 4 0 0 1 4.78 4.78 4 4 0 0 1 0 6.74 4 4 0 0 1-4.77 4.78 4 4 0 0 1-6.75 0 4 4 0 0 1-4.78-4.77 4 4 0 0 1 0-6.76ZM8 12h8"/></svg></i>
<i><svg viewBox="0 0 24 24"><path d="M3.85 8.62a4 4 0 0 1 4.78-4.77 4 4 0 0 1 6.74 0 4 4 0 0 1 4.78 4.78 4 4 0 0 1 0 6.74 4 4 0 0 1-4.77 4.78 4 4 0 0 1-6.75 0 4 4 0 0 1-4.78-4.77 4 4 0 0 1 0-6.76ZM15 9l-6 6M9 9h.01M15 15h.01"/></svg></i>
<i><svg viewBox="0 0 24 24"><path d="M3.85 8.62a4 4 0 0 1 4.78-4.77 4 4 0 0 1 6.74 0 4 4 0 0 1 4.78 4.78 4 4 0 0 1 0 6.74 4 4 0 0 1-4.77 4.78 4 4 0 0 1-6.75 0 4 4 0 0 1-4.78-4.77 4 4 0 0 1 0-6.76ZM12 8v8M8 12h8"/></svg></i>
<i><svg viewBox="0 0 24 24"><path d="M3.85 8.62a4 4 0 0 1 4.78-4.77 4 4 0 0 1 6.74 0 4 4 0 0 1 4.78 4.78 4 4 0 0 1 0 6.74 4 4 0 0 1-4.77 4.78 4 4 0 0 1-6.75 0 4 4 0 0 1-4.78-4.77 4 4 0 0 1 0-6.76ZM11 17V10a2 2 0 0 1 4-1M9 13h5M9 17h6"/></svg></i>
<i><svg viewBox="0 0 24 24"><path d="M3.85 8.62a4 4 0 0 1 4.78-4.77 4 4 0 0 1 6.74 0 4 4 0 0 1 4.78 4.78 4 4 0 0 1 0 6.74 4 4 0 0 1-4.77 4.78 4 4 0 0 1-6.75 0 4 4 0 0 1-4.78-4.77 4 4 0 0 1 0-6.76ZM9 16h5M9 12h5a2 2 0 1 0 0-4h-3v9"/></svg></i>
<i><svg viewBox="0 0 24 24"><path d="M3.85 8.62a4 4 0 0 1 4.78-4.77 4 4 0 0 1 6.74 0 4 4 0 0 1 4.78 4.78 4 4 0 0 1 0 6.74 4 4 0 0 1-4.77 4.78 4 4 0 0 1-6.75 0 4 4 0 0 1-4.78-4.77 4 4 0 0 1 0-6.76ZM11 17V8h4M11 12h3M9 16h4"/></svg></i>
<i><svg viewBox="0 0 24 24"><path d="M3.85 8.62a4 4 0 0 1 4.78-4.77 4 4 0 0 1 6.74 0 4 4 0 0 1 4.78 4.78 4 4 0 0 1 0 6.74 4 4 0 0 1-4.77 4.78 4 4 0 0 1-6.75 0 4 4 0 0 1-4.78-4.77 4 4 0 0 1 0-6.76ZM15 9l-6 6M9 9l6 6"/></svg></i>
<i><svg viewBox="0 0 24 24"><path d="M22 18H6a2 2 0 0 1-2-2V7a2 2 0 0 0-2-2M17 14V4a2 2 0 0 0-2-2h-1a2 2 0 0 0-2 2v10"/><rect x="8" y="6" width="13" height="8" rx="1"/><circle cx="18" cy="20" r="2"/><circle cx="9" cy="20" r="2"/></svg></i>
<i><svg viewBox="0 0 24 24"><circle cx="12" cy="12" r="10"/><path d="M4.9 4.9l14.2 14.2"/></svg></i>
<i><svg viewBox="0 0 24 24"><path d="M4 13c3.5-2 8-2 10 2a5.5 5.5 0 0 1 8 5M5.15 17.89c5.52-1.52 8.65-6.89 7-12C11.55 4 11.5 2 13 2c3.22 0 5 5.5 5 8 0 6.5-4.2 12-10.49 12C5.11 22 2 22 2 20c0-1.5 1.14-1.55 3.15-2.110Z"/></svg></i>
<i><svg viewBox="0 0 24 24"><rect x="2" y="6" width="20" height="12" rx="2"/><path d="M10 10h.01M10 14h.01M14 10h.01M14 14h.01M18 6v12M6 6v12"/></svg></i>
<i><svg viewBox="0 0 24 24"><rect x="2" y="6" width="20" height="12" rx="2"/><circle cx="12" cy="12" r="2"/><path d="M6 12h.01M18 12h.01"/></svg></i>
<i><svg viewBox="0 0 24 24"><path d="M3 5v14M8 5v14M12 5v14M17 5v14M21 5v14"/></svg></i>
<i><svg viewBox="0 0 24 24"><path d="M4 20h16M6 16l6-12 6 12M8 12h8"/></svg></i>
<i><svg viewBox="0 0 24 24"><path d="M9 6 6.5 3.5a1.5 1.5 0 0 0-1-.5C4.7 3 4 3.7 4 4.5V17a2 2 0 0 0 2 2h12a2 2 0 0 0 2-2v-5M10 5 8 7M2 12h20M7 19v2M17 19v2"/></svg></i>
<i><svg viewBox="0 0 24 24"><rect x="2" y="7" width="16" height="10" rx="2"/><path d="M22 11v2"/></svg></i>
<i><svg viewBox="0 0 24 24"><path d="M15 7h1a2 2 0 0 1 2 2v6a2 2 0 0 1-2 2h-2M6 7H4a2 2 0 0 0-2 2v6a2 2 0 0 0 2 2h1M11 7l-3 5h4l-3 5M22 11v2"/></svg></i>
<i><svg viewBox="0 0 24 24"><rect x="2" y="7" width="16" height="10" rx="2"/><path d="M6 11v2M10 11v2M14 11v2M22 11v2"/></svg></i>
<i><svg viewBox="0 0 24 24"><rect x="2" y="7" width="16" height="10" rx="2"/><path d="M6 11v2M22 11v2"/></svg></i>
<i><svg viewBox="0 0 24 24"><rect x="2" y="7" width="16" height="10" rx="2"/><path d="M6 11v2M10 11v2M22 11v2"/></svg></i>
<i><svg viewBox="0 0 24 24"><path d="M7 12h6M10 9v6M13 7h1a2 2 0 0 1 2 2v6a2 2 0 0 1-2 2h-1M7 7H4a2 2 0 0 0-2 2v6a2 2 0 0 0 2 2h3M20 11v2"/></svg></i>
<i><svg viewBox="0 0 24 24"><path d="M10 17h.01M10 7v6M14 7h2a2 2 0 0 1 2 2v6a2 2 0 0 1-2 2h-2M22 11v2M6 7H4a2 2 0 0 0-2 2v6a2 2 0 0 0 2 2h2"/></svg></i>
<i><svg viewBox="0 0 24 24"><path d="M4.5 3h15M6 3v16a2 2 0 0 0 2 2h8a2 2 0 0 0 2-2V3M6 14h12"/></svg></i>
<i><svg viewBox="0 0 24 24"><path d="M10.17 6.6C9.95 7.48 9.64 8.36 9 9c-.64.64-1.52.95-2.4 1.17A6 6 0 0 0 8 22c7.73 0 14-6.27 14-14a6 6 0 0 0-11.83-1.4ZM5.34 10.62a4 4 0 1 0 5.28-5.28"/></svg></i>
<i><svg viewBox="0 0 24 24"><path d="M9 9c-.64.64-1.52.95-2.4 1.17A6 6 0 0 0 8 22c4.1 0 7.8-1.8 10.3-4.6M20.7 14.3A14 14 0 0 0 22 8a6 6 0 0 0-11.83-1.4M5.34 10.62a4 4 0 0 0 6.9 3.3M2 2l20 20"/></svg></i>
<i><svg viewBox="0 0 24 24"><path d="M2 4v16M2 8h18a2 2 0 0 1 2 2v10M2 17h20M6 8v9"/></svg></i>
<i><svg viewBox="0 0 24 24"><path d="M2 20v-8a2 2 0 0 1 2-2h16a2 2 0 0 1 2 2v8M4 10V6a2 2 0 0 1 2-2h12a2 2 0 0 1 2 2v4M12 4v6M2 18h20"/></svg></i>
<i><svg viewBox="0 0 24 24"><path d="M3 20v-8a2 2 0 0 1 2-2h14a2 2 0 0 1 2 2v8M5 10V6a2 2 0 0 1 2-2h10a2 2 0 0 1 2 2v4M3 18h18"/></svg></i>
<i><svg viewBox="0 0 24 24"><circle cx="12.5" cy="8.5" r="2.5"/><path d="M12.5 2a6.5 6.5 0 0 0-6.22 4.6c-1.1 3.13-.78 3.9-3.18 6.08A3 3 0 0 0 5 18c4 0 8.4-1.8 11.4-4.3A6.5 6.5 0 0 0 12.5 2ZM18.5 6l2.19 4.5a6.48 6.48 0 0 1 .31 2 6.49 6.49 0 0 1-2.6 5.2C15.4 20.2 11 22 7 22a3 3 0 0 1-2.68-1.66L2.4 16.5"/></svg></i>
<i><svg viewBox="0 0 24 24"><path d="M17 11h1a3 3 0 0 1 0 6h-1M9 12v6M13 12v6M14 7.5c-1 0-1.44.5-3 .5s-2-.5-3-.5-1.72.5-2.5.5a2.5 2.5 0 0 1 0-5c.78 0 1.57.5 2.5.5S9.44 2 11 2s2 1.5 3 1.5 1.72-.5 2.5-.5a2.5 2.5 0 0 1 0 5c-.78 0-1.5-.5-2.5-.5ZM5 8v12a2 2 0 0 0 2 2h8a2 2 0 0 0 2-2V8"/></svg></i>
<i><svg viewBox="0 0 24 24"><path d="M13 13v5M17 11.5V8h1a3 3 0 0 1 1.4 5.7M5 8v12a2 2 0 0 0 2 2h8a2 2 0 0 0 2-2v-3M7.5 3.5a2.5 2.5 0 0 0-2 4.4M9 3c.8-.6 1.6-1 2-1 1.6 0 2 1.5 3 1.5s1.7-.5 2.5-.5a2.5 2.5 0 0 1 .8 4.9M9 12v6M2 2l20 20"/></svg></i>
<i><svg viewBox="0 0 24 24"><path d="M6 8a6 6 0 0 1 12 0c0 7 3 9 3 9H3s3-2 3-9M10.3 21a1.94 1.94 0 0 0 3.4 0"/></svg></i>
<i><svg viewBox="0 0 24 24"><path d="M19.4 14.9C20.2 16.4 21 17 21 17H3s3-2 3-9c0-3.3 2.7-6 6-6 .7 0 1.3.1 1.9.3M10.3 21a1.94 1.94 0 0 0 3.4 0"/><circle cx="18" cy="8" r="3"/></svg></i>
<i><svg viewBox="0 0 24 24"><path d="M18.5 4A6.3 8.7 0 0 1 20 9M9 9h.01"/><circle cx="9" cy="9" r="7"/><rect x="4" y="16" width="10" height="6" rx="2"/><path d="M14 19c3 0 4.6-1.6 4.6-1.6M20 19h.01"/></svg></i>
<i><svg viewBox="0 0 24 24"><path d="M6 8a6 6 0 0 1 12 0c0 7 3 9 3 9H3s3-2 3-9M10.3 21a1.94 1.94 0 0 0 3.4 0"/></svg></i>
<i><svg viewBox="0 0 24 24"><path d="M8.7 3A6 6 0 0 1 18 8a21.3 21.3 0 0 0 .6 5M17 17H3s3-2 3-9a4.67 4.67 0 0 1 .3-1.7M10.3 21a1.94 1.94 0 0 0 3.4 0M2 2l20 20"/></svg></i>
<i><svg viewBox="0 0 24 24"><path d="M19.3 14.6C20.1 16.4 21 17 21 17H3s3-2 3-9c0-3.3 2.7-6 6-6 1 0 1.9.2 2.7.7M10.3 21a1.94 1.94 0 0 0 3.4 0M15 8h6M18 5v6"/></svg></i>
<i><svg viewBox="0 0 24 24"><path d="M6 8a6 6 0 0 1 12 0c0 7 3 9 3 9H3s3-2 3-9M10.3 21a1.94 1.94 0 0 0 3.4 0M4 2C2.8 3.7 2 5.7 2 8M22 8c0-2.3-.8-4.3-2-6"/></svg></i>
<i><svg viewBox="0 0 24 24"><rect x="3" y="3" width="13" height="7" rx="1"/><rect x="3" y="14" width="13" height="7" rx="1"/><path d="M22 9l-3 3 3 3"/></svg></i>
<i><svg viewBox="0 0 24 24"><rect x="8" y="3" width="13" height="7" rx="1"/><rect x="8" y="14" width="13" height="7" rx="1"/><path d="M2 9l3 3-3 3"/></svg></i>
<i><svg viewBox="0 0 24 24"><rect x="3" y="3" width="7" height="13" rx="1"/><rect x="14" y="3" width="7" height="13" rx="1"/><path d="M9 22l3-3 3 3"/></svg></i>
<i><svg viewBox="0 0 24 24"><rect x="3" y="8" width="7" height="13" rx="1"/><rect x="14" y="8" width="7" height="13" rx="1"/><path d="M9 2l3 3 3-3"/></svg></i>
<i><svg viewBox="0 0 24 24"><path d="M12.41 13.02A5 5 0 0 1 22 15c0 3.87-4 7-9 7-4.08 0-8.15-.82-10.37-2.46-.43-.32-.63-.83-.62-1.36C2.12 12.72 2.63 2 10 2a3 3 0 0 1 3 3 2 2 0 0 1-2 2c-1.1 0-1.64-.44-2-1M15 14a5 5 0 0 0-7.58 2M9.96 6.83C8.02 7.98 9.5 13 8 15"/></svg></i>
<i><svg viewBox="0 0 24 24"><circle cx="18.5" cy="17.5" r="3.5"/><circle cx="5.5" cy="17.5" r="3.5"/><circle cx="15" cy="5" r="1"/><path d="M12 17.5V14l-3-3 4-3 2 3h2"/></svg></i>
<i><svg viewBox="0 0 24 24"><rect x="14" y="14" width="4" height="6" rx="2"/><rect x="6" y="4" width="4" height="6" rx="2"/><path d="M6 20h4M14 10h4M6 14h2v6M14 4h2v6"/></svg></i>
<i><svg viewBox="0 0 24 24"><path d="M10 10h4M19 7V4a1 1 0 0 0-1-1h-2a1 1 0 0 0-1 1v3M20 21a2 2 0 0 0 2-2v-3.85c0-1.39-2-2.96-2-4.830V8a1 1 0 0 0-1-1h-4a1 1 0 0 0-1 1v11a2 2 0 0 0 2 2zM22 16H2M4 21a2 2 0 0 1-2-2v-3.85c0-1.39 2-2.96 2-4.83V8a1 1 0 0 1 1-1h4a1 1 0 0 1 1 1v11a2 2 0 0 1-2 2zM9 7V4a1 1 0 0 0-1-1H6a1 1 0 0 0-1 1v3"/></svg></i>
<i><svg viewBox="0 0 24 24"><circle cx="12" cy="11.9" r="2"/><path d="M6.7 3.4c-.9 2.5 0 5.2 2.2 6.7C6.5 9 3.7 9.6 2 11.6M8.9 10.1l1.4.8M17.3 3.4c.9 2.5 0 5.2-2.2 6.7 2.4-1.2 5.2-.6 6.9 1.5M15.1 10.1l-1.4.8M16.7 20.8c-2.6-.4-4.6-2.6-4.7-5.3-.2 2.6-2.1 4.8-4.7 5.2M12 13.9v1.6M13.5 5.4c-1-.2-2-.2-3 0M17 16.4c.7-.7 1.2-1.6 1.5-2.5M5.5 13.9c.3.9.8 1.8 1.5 2.5"/></svg></i>
<i><svg viewBox="0 0 24 24"><path d="M16 7h.01M3.4 18H12a8 8 0 0 0 8-8V7a4 4 0 0 0-7.28-2.3L2 20M20 7l2 .5-2 .5M10 18v3M14 17.75V21M7 18a6 6 0 0 0 3.84-10.61"/></svg></i>
<i><svg viewBox="0 0 24 24"><path d="M11.77 19.09c4.92.87 6.14-6.03 1.21-6.9m-1.21 6.9-5.91-1.04m5.91 1.04-.35 1.97m1.56-8.87c4.93.87 6.14-6.02 1.22-6.89m-1.22 6.89-3.94-.69m5.16-6.2L8.29 4.26m5.91 1.04.35-1.97M7.48 20.36l3.13-17.72"/></svg></i>
<i><svg viewBox="0 0 24 24"><circle cx="9" cy="9" r="7"/><circle cx="15" cy="15" r="7"/></svg></i>
<i><svg viewBox="0 0 24 24"><path d="M3 3h18M20 7H8M20 11H8M10 19h10M8 15h12M4 3v14"/><circle cx="4" cy="19" r="2"/></svg></i>
<i><svg viewBox="0 0 24 24"><rect x="14" y="3" width="7" height="7" rx="1"/><path d="M10 21V8a1 1 0 0 0-1-1H4a1 1 0 0 0-1 1v12a1 1 0 0 0 1 1h12a1 1 0 0 0 1-1v-5a1 1 0 0 0-1-1H3"/></svg></i>
<i><svg viewBox="0 0 24 24"><path d="M7 7l10 10-5 5V2l5 5L7 17"/></svg></i>
<i><svg viewBox="0 0 24 24"><path d="M7 7l10 10-5 5V2l5 5L7 17M18 12h3M3 12h3"/></svg></i>
<i><svg viewBox="0 0 24 24"><path d="M17 17l-5 5V12l-5 5M2 2l20 20M14.5 9.5 17 7l-5-5v4.5"/></svg></i>
<i><svg viewBox="0 0 24 24"><path d="M7 7l10 10-5 5V2l5 5L7 17M20.83 14.83a4 4 0 0 0 0-5.66M18 12h.01"/></svg></i>
<i><svg viewBox="0 0 24 24"><path d="M6 12h9a4 4 0 0 1 0 8H7a1 1 0 0 1-1-1V5a1 1 0 0 1 1-1h7a4 4 0 0 1 0 8"/></svg></i>
<i><svg viewBox="0 0 24 24"><path d="M21 16V8a2 2 0 0 0-1-1.73l-7-4a2 2 0 0 0-2 0l-7 4A2 2 0 0 0 3 8v8a2 2 0 0 0 1 1.73l7 4a2 2 0 0 0 2 0l7-4A2 2 0 0 0 21 16z"/><circle cx="12" cy="12" r="4"/></svg></i>
<i><svg viewBox="0 0 24 24"><circle cx="11" cy="13" r="9"/><path d="M14.35 4.65 16.3 2.7a2.41 2.41 0 0 1 3.4 0l1.6 1.6a2.4 2.4 0 0 1 0 3.4l-1.95 1.95M22 2l-1.5 1.5"/></svg></i>
<i><svg viewBox="0 0 24 24"><path d="M17 10c.7-.7 1.69 0 2.5 0a2.5 2.5 0 1 0 0-5 .5.5 0 0 1-.5-.5 2.5 2.5 0 1 0-5 0c0 .81.7 1.8 0 2.5l-7 7c-.7.7-1.69 0-2.5 0a2.5 2.5 0 0 0 0 5c.28 0 .5.22.5.5a2.5 2.5 0 1 0 5 0c0-.81-.7-1.8 0-2.5Z"/></svg></i>
<i><svg viewBox="0 0 24 24"><path d="M4 19.5v-15A2.5 2.5 0 0 1 6.5 2H19a1 1 0 0 1 1 1v18a1 1 0 0 1-1 1H6.5a1 1 0 0 1 0-5H20"/></svg></i>
<i><svg viewBox="0 0 24 24"><path d="M4 19.5v-15A2.5 2.5 0 0 1 6.5 2H19a1 1 0 0 1 1 1v18a1 1 0 0 1-1 1H6.5a1 1 0 0 1 0-5H20M8 13l4-7 4 7M9.1 11h5.7"/></svg></i>
<i><svg viewBox="0 0 24 24"><path d="M4 19.5v-15A2.5 2.5 0 0 1 6.5 2H19a1 1 0 0 1 1 1v18a1 1 0 0 1-1 1H6.5a1 1 0 0 1 0-5H20M12 6v7M16 8v3M8 8v3"/></svg></i>
<i><svg viewBox="0 0 24 24"><path d="M4 19.5v-15A2.5 2.5 0 0 1 6.5 2H19a1 1 0 0 1 1 1v18a1 1 0 0 1-1 1H6.5a1 1 0 0 1 0-5H20M9 9.5l2 2 4-4"/></svg></i>
<i><svg viewBox="0 0 24 24"><path d="M2 16V4a2 2 0 0 1 2-2h11M22 18H11a2 2 0 1 0 0 4h10.5a.5.5 0 0 0 .5-.5v-15a.5.5 0 0 0-.5-.5H11a2 2 0 0 0-2 2v12M5 14H4a2 2 0 1 0 0 4h1"/></svg></i>
<i><svg viewBox="0 0 24 24"><path d="M12 17h1.5M12 22h1.5M12 2h1.5M17.5 22H19a1 1 0 0 0 1-1M17.5 2H19a1 1 0 0 1 1 1v1.5M20 14v3h-2.5M20 8.5V10M4 10V8.5M4 19.5V14M4 4.5A2.5 2.5 0 0 1 6.5 2H8M8 22H6.5a1 1 0 0 1 0-5H8"/></svg></i>
<i><svg viewBox="0 0 24 24"><path d="M4 19.5v-15A2.5 2.5 0 0 1 6.5 2H19a1 1 0 0 1 1 1v18a1 1 0 0 1-1 1H6.5a1 1 0 0 1 0-5H20M12 13V7M9 10l3 3 3-3"/></svg></i>
<i><svg viewBox="0 0 24 24"><path d="M4 19.5v-15A2.5 2.5 0 0 1 6.5 2H19a1 1 0 0 1 1 1v18a1 1 0 0 1-1 1H6.5a1 1 0 0 1 0-5H20M8 12v-2a4 4 0 0 1 8 0v2M8 12h1v2H8zM15 12h1v2h-1z"/></svg></i>
<i><svg viewBox="0 0 24 24"><path d="M4 19.5v-15A2.5 2.5 0 0 1 6.5 2H19a1 1 0 0 1 1 1v18a1 1 0 0 1-1 1H6.5a1 1 0 0 1 0-5H20M16 8.2A2.22 2.22 0 0 0 13.8 6c-.8 0-1.4.3-1.8.9-.4-.6-1-.9-1.8-.9A2.22 2.22 0 0 0 8 8.2c0 .6.3 1.2.7 1.6L12 13l3.3-3.2c.4-.4.7-1 .7-1.6"/></svg></i>
<i><svg viewBox="0 0 24 24"><path d="M4 19.5v-15A2.5 2.5 0 0 1 6.5 2H19a1 1 0 0 1 1 1v18a1 1 0 0 1-1 1H6.5a1 1 0 0 1 0-5H20M20 13.7l-2.1-2.1a2 2 0 0 0-2.8 0L9.7 17"/><circle cx="10" cy="8" r="2"/></svg></i>
<i><svg viewBox="0 0 24 24"><path d="M13 2H6.5A2.5 2.5 0 0 0 4 4.5v15M20 10v11a1 1 0 0 1-1 1H6.5a1 1 0 0 1 0-5H20M18.4 2.6a2 2 0 0 1 3 3L16 11l-4 1 1-4z"/></svg></i>
<i><svg viewBox="0 0 24 24"><path d="M18 6V4a2 2 0 1 0-4 0v2M20 15v6a1 1 0 0 1-1 1H6.5a1 1 0 0 1 0-5H20M4 19.5v-15A2.5 2.5 0 0 1 6.5 2H10"/><rect x="12" y="6" width="8" height="5" rx="1"/></svg></i>
<i><svg viewBox="0 0 24 24"><path d="M4 19.5v-15A2.5 2.5 0 0 1 6.5 2H19a1 1 0 0 1 1 1v18a1 1 0 0 1-1 1H6.5a1 1 0 0 1 0-5H20M10 2v8l3-3 3 3V2"/></svg></i>
<i><svg viewBox="0 0 24 24"><path d="M4 19.5v-15A2.5 2.5 0 0 1 6.5 2H19a1 1 0 0 1 1 1v18a1 1 0 0 1-1 1H6.5a1 1 0 0 1 0-5H20M9 10h6"/></svg></i>
<i><svg viewBox="0 0 24 24"><path d="M12 7v14M3 18a1 1 0 0 1-1-1V4a1 1 0 0 1 1-1h5a4 4 0 0 1 4 4 4 4 0 0 1 4-4h5a1 1 0 0 1 1 1v13a1 1 0 0 1-1 1h-6a3 3 0 0 0-3 3 3 3 0 0 0-3-3z"/></svg></i>
<i><svg viewBox="0 0 24 24"><path d="M12 21V7M16 12l2 2 4-4M22 6V4a1 1 0 0 0-1-1h-5a4 4 0 0 0-4 4 4 4 0 0 0-4-4H3a1 1 0 0 0-1 1v13a1 1 0 0 0 1 1h6a3 3 0 0 1 3 3 3 3 0 0 1 3-3h6a1 1 0 0 0 1-1v-1.3"/></svg></i>
<i><svg viewBox="0 0 24 24"><path d="M12 7v14M16 12h2M16 8h2M3 18a1 1 0 0 1-1-1V4a1 1 0 0 1 1-1h5a4 4 0 0 1 4 4 4 4 0 0 1 4-4h5a1 1 0 0 1 1 1v13a1 1 0 0 1-1 1h-6a3 3 0 0 0-3 3 3 3 0 0 0-3-3zM6 12h2M6 8h2"/></svg></i>
<i><svg viewBox="0 0 24 24"><path d="M4 19.5v-15A2.5 2.5 0 0 1 6.5 2H19a1 1 0 0 1 1 1v18a1 1 0 0 1-1 1H6.5a1 1 0 0 1 0-5H20M12 7v6M9 10h6"/></svg></i>
<i><svg viewBox="0 0 24 24"><path d="M4 19.5v-15A2.5 2.5 0 0 1 6.5 2H19a1 1 0 0 1 1 1v18a1 1 0 0 1-1 1H6.5a1 1 0 0 1 0-5H20M8 11h8M8 7h6"/></svg></i>
<i><svg viewBox="0 0 24 24"><path d="M4 19.5v-15A2.5 2.5 0 0 1 6.5 2H19a1 1 0 0 1 1 1v18a1 1 0 0 1-1 1H6.5a1 1 0 0 1 0-5H20M16 8V6H8v2M12 6v7M10 13h4"/></svg></i>
<i><svg viewBox="0 0 24 24"><path d="M4 19.5v-15A2.5 2.5 0 0 1 6.5 2H19a1 1 0 0 1 1 1v18a1 1 0 0 1-1 1H6.5a1 1 0 0 1 0-5H20M12 13V7M9 10l3-3 3 3"/></svg></i>
<i><svg viewBox="0 0 24 24"><path d="M12 13V7M18 2h1a1 1 0 0 1 1 1v18a1 1 0 0 1-1 1H6.5a1 1 0 0 1 0-5H20M4 19.5v-15A2.5 2.5 0 0 1 6.5 2H6M9 10l3-3 3 3M9 5l3-3 3 3"/></svg></i>
<i><svg viewBox="0 0 24 24"><path d="M4 19.5v-15A2.5 2.5 0 0 1 6.5 2H19a1 1 0 0 1 1 1v18a1 1 0 0 1-1 1H6.5a1 1 0 0 1 0-5H20M15 13a3 3 0 1 0-6 0"/><circle cx="12" cy="8" r="2"/></svg></i>
<i><svg viewBox="0 0 24 24"><path d="M4 19.5v-15A2.5 2.5 0 0 1 6.5 2H19a1 1 0 0 1 1 1v18a1 1 0 0 1-1 1H6.5a1 1 0 0 1 0-5H20M14.5 7l-5 5M9.5 7l5 5"/></svg></i>
</div>
</body></html>
